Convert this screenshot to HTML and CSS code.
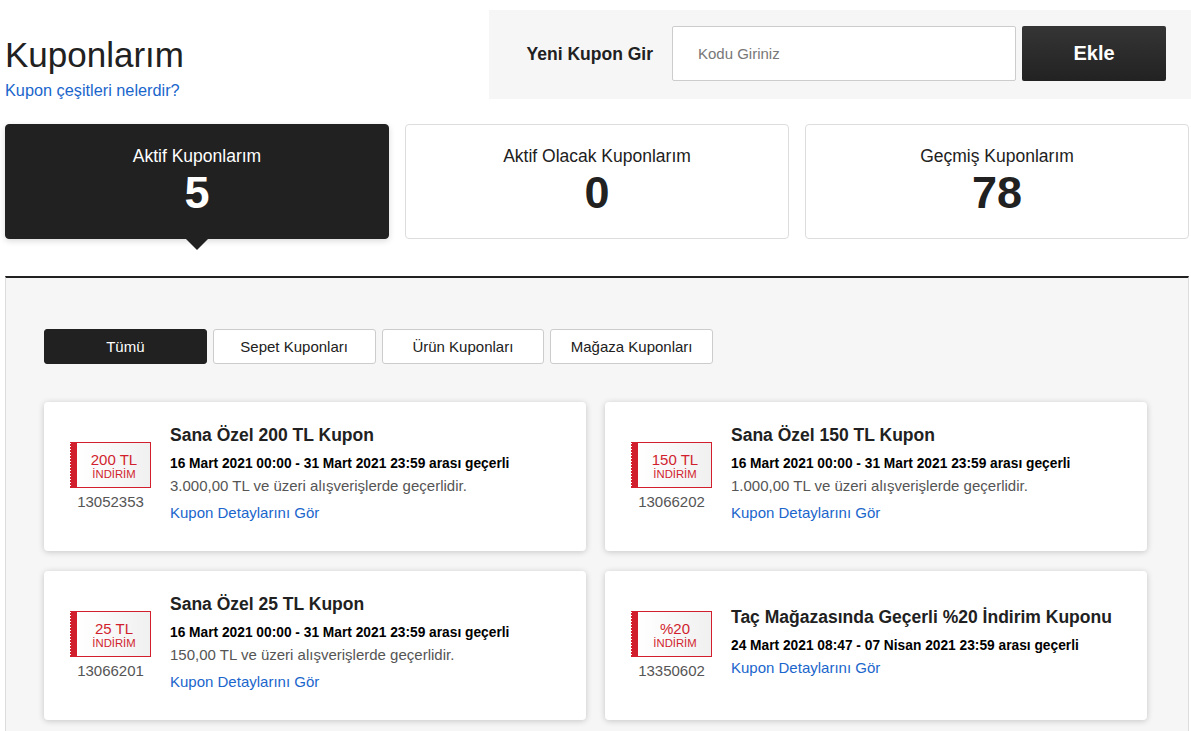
FILE: index.html
```html
<!DOCTYPE html>
<html lang="tr">
<head>
    <meta charset="UTF-8">
    <title>Kuponlarım</title>
    <link rel="stylesheet" href="styles.css">
</head>
<body>
    <div class="icerik">
        <div class="ust">
            <div class="baslik">
                <h1>Kuponlarım</h1>
                <a href="#">Kupon çeşitleri nelerdir?</a>
            </div>
            <form class="yeni-kupon">
                <label for="kod">Yeni Kupon Gir</label>
                <input id="kod" type="text" placeholder="Kodu Giriniz">
                <button type="button">Ekle</button>
            </form>
        </div>

        <div class="sekmeler">
            <div class="sekme aktif">
                <span>Aktif Kuponlarım</span>
                <b>5</b>
            </div>
            <div class="sekme">
                <span>Aktif Olacak Kuponlarım</span>
                <b>0</b>
            </div>
            <div class="sekme">
                <span>Geçmiş Kuponlarım</span>
                <b>78</b>
            </div>
        </div>

        <div class="panel">
            <div class="filtre">
                <a href="#" class="secili">Tümü</a>
                <a href="#">Sepet Kuponları</a>
                <a href="#">Ürün Kuponları</a>
                <a href="#">Mağaza Kuponları</a>
            </div>

            <div class="kuponlar">
                <div class="kupon">
                    <div class="sol">
                        <div class="bilet"><strong>200 TL</strong><small>İNDİRİM</small></div>
                        <div class="no">13052353</div>
                    </div>
                    <div class="sag">
                        <h3>Sana Özel 200 TL Kupon</h3>
                        <p class="tarih">16 Mart 2021 00:00 - 31 Mart 2021 23:59 arası geçerli</p>
                        <p class="alt">3.000,00 TL ve üzeri alışverişlerde geçerlidir.</p>
                        <a href="#">Kupon Detaylarını Gör</a>
                    </div>
                </div>

                <div class="kupon">
                    <div class="sol">
                        <div class="bilet"><strong>150 TL</strong><small>İNDİRİM</small></div>
                        <div class="no">13066202</div>
                    </div>
                    <div class="sag">
                        <h3>Sana Özel 150 TL Kupon</h3>
                        <p class="tarih">16 Mart 2021 00:00 - 31 Mart 2021 23:59 arası geçerli</p>
                        <p class="alt">1.000,00 TL ve üzeri alışverişlerde geçerlidir.</p>
                        <a href="#">Kupon Detaylarını Gör</a>
                    </div>
                </div>

                <div class="kupon">
                    <div class="sol">
                        <div class="bilet"><strong>25 TL</strong><small>İNDİRİM</small></div>
                        <div class="no">13066201</div>
                    </div>
                    <div class="sag">
                        <h3>Sana Özel 25 TL Kupon</h3>
                        <p class="tarih">16 Mart 2021 00:00 - 31 Mart 2021 23:59 arası geçerli</p>
                        <p class="alt">150,00 TL ve üzeri alışverişlerde geçerlidir.</p>
                        <a href="#">Kupon Detaylarını Gör</a>
                    </div>
                </div>

                <div class="kupon">
                    <div class="sol">
                        <div class="bilet"><strong>%20</strong><small>İNDİRİM</small></div>
                        <div class="no">13350602</div>
                    </div>
                    <div class="sag">
                        <h3>Taç Mağazasında Geçerli %20 İndirim Kuponu</h3>
                        <p class="tarih">24 Mart 2021 08:47 - 07 Nisan 2021 23:59 arası geçerli</p>
                        <a href="#">Kupon Detaylarını Gör</a>
                    </div>
                </div>
            </div>
        </div>
    </div>
</body>
</html>
```

FILE: styles.css
```css
* {
    margin: 0;
    padding: 0;
    box-sizing: border-box;
}
html, body {
    height: 731px;
    overflow: hidden;
}
body {
    font-family: "Liberation Sans", Arial, sans-serif;
    color: #212121;
    background-color: #fff;
}
a {
    color: #1a66cc;
    text-decoration: none;
}
.icerik {
    padding: 10px 0 0 5px;
}

/* Ust kisim */
.ust {
    display: flex;
    justify-content: space-between;
    height: 89px;
}
.baslik {
    padding-top: 25px;
}
.baslik h1 {
    font-size: 35px;
    font-weight: normal;
    line-height: 40px;
}
.baslik a {
    display: block;
    font-size: 16.3px;
    line-height: 20px;
    margin-top: 5px;
}
.yeni-kupon {
    display: flex;
    align-items: center;
    width: 702px;
    padding-right: 25px;
    padding-bottom: 2px;
    background-color: #f6f6f6;
}
.yeni-kupon label {
    width: 183px;
    padding-top: 1px;
    padding-right: 19px;
    text-align: right;
    font-size: 17.5px;
    font-weight: bold;
}
.yeni-kupon input {
    width: 344px;
    height: 55px;
    padding-left: 25px;
    border: 1px solid #ccc;
    border-radius: 2px;
    font-family: inherit;
    font-size: 15px;
    outline: none;
}
.yeni-kupon input::placeholder {
    color: #777;
    opacity: 1;
}
.yeni-kupon button {
    width: 144px;
    height: 55px;
    margin-left: 6px;
    border: 0;
    border-radius: 2px;
    background: linear-gradient(#353535, #222);
    color: #fff;
    font-family: inherit;
    font-size: 20px;
    font-weight: bold;
}

/* Sekmeler */
.sekmeler {
    display: flex;
    gap: 16px;
    width: 1184px;
    margin-top: 25px;
}
.sekme {
    position: relative;
    flex: 1;
    height: 115px;
    padding-top: 21px;
    border: 1px solid #ddd;
    border-radius: 4px;
    text-align: center;
}
.sekme span {
    display: block;
    font-size: 17.5px;
    line-height: 20px;
}
.sekme b {
    display: block;
    margin-top: 1px;
    font-size: 45px;
    line-height: 52px;
}
.sekme.aktif {
    background-color: #212121;
    border-color: #212121;
    color: #fff;
    box-shadow: 0 2px 6px rgba(0, 0, 0, .15);
}
.sekme.aktif::after {
    content: "";
    position: absolute;
    left: 180px;
    bottom: -12px;
    border-style: solid;
    border-width: 11px 11px 0;
    border-color: #212121 transparent transparent;
}

/* Panel */
.panel {
    width: 1184px;
    height: 480px;
    margin-top: 37px;
    padding: 51px 41px 0 38px;
    background-color: #f6f6f6;
    border-top: 2px solid #212121;
    border-left: 1px solid #ddd;
    border-right: 1px solid #ddd;
}
.filtre {
    display: flex;
    gap: 6px;
    width: 669px;
}
.filtre a {
    flex: 1;
    height: 35px;
    line-height: 33px;
    text-align: center;
    font-size: 15px;
    color: #212121;
    background-color: #fff;
    border: 1px solid #ccc;
    border-radius: 3px;
}
.filtre a.secili {
    color: #fff;
    background-color: #212121;
    border-color: #212121;
}

/* Kuponlar */
.kuponlar {
    display: grid;
    grid-template-columns: 542px 542px;
    grid-auto-rows: 149px;
    column-gap: 19px;
    row-gap: 20px;
    margin-top: 38px;
}
.kupon {
    display: flex;
    align-items: center;
    padding-left: 26px;
    background-color: #fff;
    border-radius: 4px;
    box-shadow: 0 1px 6px rgba(0, 0, 0, .2);
}
.sol {
    width: 81px;
    flex-shrink: 0;
    margin-bottom: 1px;
    text-align: center;
}
.bilet {
    position: relative;
    height: 46px;
    padding-top: 2px;
    padding-left: 8px;
    border: 1px solid #d11f2e;
    border-left: 0;
    background: linear-gradient(to right, #d11f2e 7px, #fff 7px, #f0f0f0);
    color: #d11f2e;
    display: flex;
    flex-direction: column;
    justify-content: center;
}
/* bilet kenarindaki delikler */
.bilet::before {
    content: "";
    position: absolute;
    left: 0;
    top: 0;
    bottom: 0;
    width: 1px;
    background: repeating-linear-gradient(#fff 0, #fff 1px, transparent 1px, transparent 3px);
}
.bilet strong {
    font-size: 15px;
    font-weight: normal;
    line-height: 16px;
}
.bilet small {
    font-size: 11.3px;
    line-height: 12px;
}
.no {
    margin-top: 6px;
    font-size: 15px;
    line-height: 16px;
    color: #555;
}
.sag {
    padding-left: 19px;
    padding-bottom: 8px;
}
.sag h3 {
    font-size: 17.5px;
    line-height: 20px;
    margin-bottom: 11px;
}
.sag p {
    line-height: 16px;
}
.sag .tarih {
    font-size: 13.75px;
    font-weight: bold;
    color: #000;
    margin-bottom: 6px;
}
.sag .alt {
    font-size: 15px;
    color: #555;
    margin-bottom: 11px;
}
.sag a {
    display: block;
    font-size: 15px;
    line-height: 16px;
}
```
